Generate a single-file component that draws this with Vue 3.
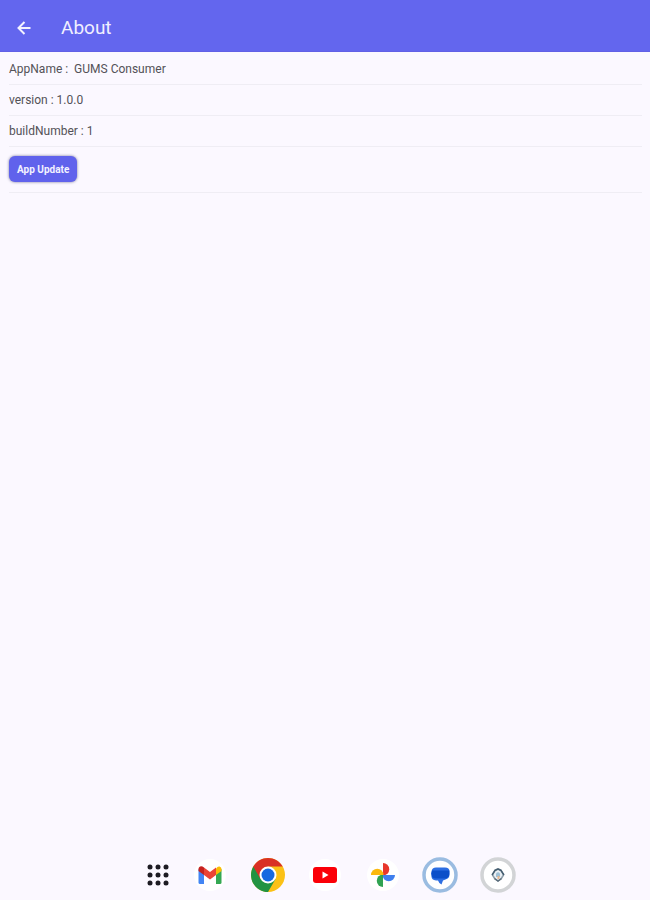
<script setup>
const details = [
  { label: 'AppName : ', value: 'GUMS Consumer' },
  { label: 'version :', value: '1.0.0' },
  { label: 'buildNumber :', value: '1' },
]
const dots = [3, 11, 19]
</script>

<template>
  <div class="screen">
    <header class="bar">
      <button class="back" type="button" aria-label="Back">
        <svg viewBox="0 0 16 16" width="16" height="16">
          <path d="M14.500 8H3M8.500 2L2.500 8l6 6" fill="none" stroke="#f3f2ff" stroke-width="2" />
        </svg>
      </button>
      <h1>About</h1>
    </header>

    <main class="content">
      <p v-for="item in details" :key="item.label" class="row">{{ item.label }} {{ item.value }}</p>
      <div class="row action">
        <button class="update" type="button">App Update</button>
      </div>
    </main>

    <nav class="dock" aria-label="Apps">
      <button class="launcher" type="button" aria-label="All apps">
        <svg viewBox="0 0 22 22" width="22" height="22" fill="#1c1b22">
          <template v-for="y in dots" :key="y">
            <circle v-for="x in dots" :key="x" :cx="x" :cy="y" r="2.5" />
          </template>
        </svg>
      </button>
      <div class="apps">
        <button class="app" type="button" aria-label="Gmail">
          <svg viewBox="0 0 36 36">
            <circle cx="18" cy="18" r="16" fill="#fff" />
            <path d="M6.5 12v13.500q0 1.500 1.500 1.500h4V16z" fill="#4285f4" />
            <path d="M24 16v11h4q1.500 0 1.500-1.500V12z" fill="#34a853" />
            <path d="M24 11.500v6.500l5.500-4V12q0-2-2-2.500-1.200-.2-2 .5z" fill="#fbbc04" />
            <path d="M12 18v-7.500l6 4.500 6-4.500V18l-6 4.500z" fill="#ea4335" />
            <path d="M6.500 12v2l5.500 4v-7.500l-1.500-1q-1.800-.8-3.200.5-.8.8-.8 2z" fill="#c5221f" />
          </svg>
        </button>
        <button class="app" type="button" aria-label="Chrome">
          <svg viewBox="0 0 36 36">
            <circle cx="18" cy="18" r="17" fill="#fbc116" />
            <path d="M18 18L3.300 9.500A17 17 0 0 0 18 35l7.400-12.800z" fill="#229342" />
            <path d="M3.300 9.500A17 17 0 0 1 32.700 9.500H18l-7.400 12.700z" fill="#d93025" />
            <circle cx="18" cy="18" r="8.500" fill="#fff" />
            <circle cx="18" cy="18" r="6.500" fill="#1769e0" />
          </svg>
        </button>
        <button class="app" type="button" aria-label="YouTube">
          <svg viewBox="0 0 36 36">
            <circle cx="18" cy="18" r="16" fill="#fff" />
            <rect x="6" y="10" width="24" height="16" rx="3" fill="#fb0007" />
            <path d="M15.500 14.500v7l6-3.500z" fill="#fff" />
          </svg>
        </button>
        <button class="app" type="button" aria-label="Photos">
          <svg viewBox="0 0 36 36">
            <circle cx="18" cy="18" r="16" fill="#fff" />
            <path d="M18 18.500V6a6.200 6.200 0 0 1 0 12.500z" fill="#e8372c" />
            <path d="M17.500 18H30a6.200 6.200 0 0 1-12.500 0z" fill="#3f7fee" />
            <path d="M18 17.500V30a6.200 6.200 0 0 1 0-12.500z" fill="#30a352" />
            <path d="M18.500 18H6a6.200 6.200 0 0 1 12.500 0z" fill="#fbb90d" />
          </svg>
        </button>
        <button class="app" type="button" aria-label="Messages">
          <svg viewBox="0 0 36 36">
            <circle cx="18" cy="18" r="16" fill="#fff" stroke="#9abce1" stroke-width="3.500" />
            <path d="M14 10.500h9q4.500 0 4.500 4v3q0 4-4 5l-2.500 1-1.500 4q-2.500-1-3.500-4h-2q-4.500-.5-4.500-4v-1.500Q8.500 16.500 9.500 14.500q.5-4 4.500-4z" fill="#2c6ee2" />
            <path d="M10 13.500h17.300v3.500q0 3.500-3.500 4.500H14q-4.500 0-4.500-4z" fill="#0b4fc9" />
          </svg>
        </button>
        <button class="app" type="button" aria-label="GUMS Consumer">
          <svg viewBox="0 0 36 36">
            <circle cx="18" cy="18" r="16" fill="#fff" stroke="#d2d4d6" stroke-width="3.500" />
            <path d="M18 12l3 1 2.500 5-2.500 4-3 2-3-2-2.500-4 2.500-5z" fill="#e9eff3" stroke="#90a0ab" stroke-width="1.500" stroke-linejoin="round" />
            <path d="M12 18l3-4.500 3-1.500 3 1.500 3 4.500" fill="none" stroke="#455e70" stroke-width="1.500" stroke-linejoin="round" />
            <path d="M16 16.500q2-2.500 4 0V20h-4z" fill="#9fc1d6" />
            <path d="M17.500 19h2v3h-2z" fill="#e7b58c" />
            <path d="M14.500 21.500L18 24l3.500-2.500" fill="none" stroke="#5b6d7b" stroke-width="1.500" />
          </svg>
        </button>
      </div>
    </nav>
  </div>
</template>

<style>
body {
  margin: 0;
  background: #fbf8ff;
}
</style>

<style scoped>
.screen {
  display: flex;
  flex-direction: column;
  min-height: 100vh;
  font-family: Roboto, "Liberation Sans", sans-serif;
  color: #535257;
}
button {
  border: 0;
  padding: 0;
  background: none;
  font-family: inherit;
  cursor: pointer;
}
svg {
  display: block;
}
.bar {
  display: flex;
  align-items: center;
  gap: 29px;
  box-sizing: border-box;
  height: 52px;
  padding: 5px 16px 0;
  background: #6366ee;
  border-bottom: 1px solid #6260e6;
}
h1 {
  margin: 0;
  font-size: 19px;
  line-height: 24px;
  font-weight: 400;
  color: #f0efff;
}
.content {
  flex: 1;
  padding: 2px 8px 0 9px;
}
.row {
  margin: 0;
  padding: 8px 0 7px;
  border-bottom: 1px solid #efedf4;
  font-size: 12px;
  line-height: 15px;
  white-space: pre-wrap;
}
.action {
  padding: 9px 0 10px;
}
.update {
  display: block;
  height: 26px;
  padding: 2px 8px 0;
  border-radius: 6px;
  background: #6062ec;
  box-shadow: 0 0 3px #77759a;
  font-size: 10px;
  line-height: 16px;
  font-weight: 700;
  color: #f3f2ff;
}
.dock {
  display: flex;
  align-items: center;
  justify-content: center;
  gap: 23px;
  padding: 7px 0 7px 13px;
}
.apps {
  display: flex;
  justify-content: space-between;
  width: 324px;
}
.app {
  width: 36px;
  height: 36px;
}
</style>
